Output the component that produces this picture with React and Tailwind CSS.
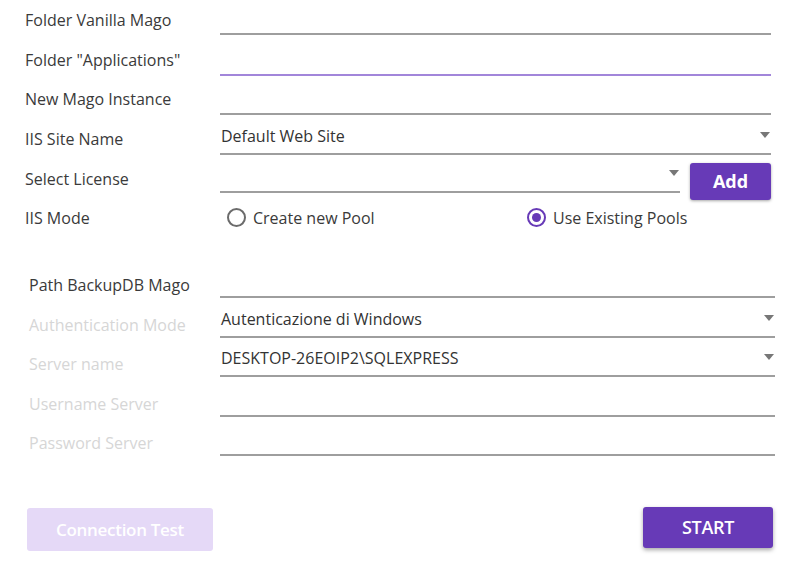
const font = { fontFamily: '"Open Sans", "Noto Sans", sans-serif' };

function Arrow() {
  return (
    <svg width="10" height="6" viewBox="0 0 10 6" className="shrink-0">
      <path d="M0 0h10L5 6z" fill="#777" />
    </svg>
  );
}

function Field({ value, select, focused, className = "" }) {
  return (
    <div
      className={`flex-1 flex items-end justify-between h-full pb-[8px] border-b-2 ${
        focused ? "border-[#a286da]" : "border-[#9e9e9e]"
      } ${className}`}
    >
      <span className="pl-[1px] text-[#333] leading-none mb-[1px]">{value}</span>
      {select && (
        <span className="mb-[7px] mr-[1px]">
          <Arrow />
        </span>
      )}
    </div>
  );
}

function Row({ label, h, children, muted, w = "w-[195px]", pb = "pb-[4px]" }) {
  return (
    <div className={`flex items-end ${h}`}>
      <div
        className={`${w} ${pb} shrink-0 ${
          muted ? "text-[#d6d6d6]" : "text-[#3a3a3a]"
        }`}
      >
        {label}
      </div>
      {children}
    </div>
  );
}

function Radio({ checked, label }) {
  return (
    <label className="flex items-center gap-[7px] text-[#3a3a3a]">
      <span
        className={`w-[19px] h-[19px] rounded-full border-2 flex items-center justify-center ${
          checked ? "border-[#673ab7]" : "border-[#6b6b6b]"
        }`}
      >
        {checked && <span className="w-[9px] h-[9px] rounded-full bg-[#673ab7]" />}
      </span>
      {label}
    </label>
  );
}

export default function App() {
  return (
    <div className="w-[802px] h-[568px] bg-white text-[16px] overflow-hidden" style={font}>
      <div className="pl-[25px] pr-[31px]">
        <Row label="Folder Vanilla Mago" h="h-[35px]" pb="pb-[3px]">
          <Field />
        </Row>
        <Row label={'Folder "Applications"'} h="h-[41px]">
          <Field focused />
        </Row>
        <Row label="New Mago Instance" h="h-[39px]">
          <Field />
        </Row>
        <Row label="IIS Site Name" h="h-[40px]">
          <Field value="Default Web Site" select />
        </Row>
        <div className="flex items-end h-[45px]">
          <div className="w-[195px] shrink-0 pb-[9px] text-[#3a3a3a]">Select License</div>
          <Field select className="mb-[7px] h-[38px]" />
          <button className="ml-[10px] w-[81px] h-[37px] rounded-[3px] bg-[#673ab7] text-white font-bold text-[18px] shadow-[0_1px_3px_rgba(0,0,0,0.35)]">
            Add
          </button>
        </div>
        <div className="flex items-center h-[35px]">
          <div className="w-[202px] shrink-0 text-[#3a3a3a]">IIS Mode</div>
          <div className="w-[300px]">
            <Radio label="Create new Pool" />
          </div>
          <Radio checked label="Use Existing Pools" />
        </div>
      </div>

      <div className="pl-[29px] pr-[27px] mt-[23px]">
        <Row label="Path BackupDB Mago" h="h-[40px]" w="w-[191px]" pb="pb-[1px]">
          <Field />
        </Row>
        <Row label="Authentication Mode" h="h-[40px]" w="w-[191px]" pb="pb-[1px]" muted>
          <Field value="Autenticazione di Windows" select />
        </Row>
        <Row label="Server name" h="h-[39px]" w="w-[191px]" pb="pb-[1px]" muted>
          <Field value="DESKTOP-26EOIP2\SQLEXPRESS" select />
        </Row>
        <Row label="Username Server" h="h-[40px]" w="w-[191px]" pb="pb-[1px]" muted>
          <Field />
        </Row>
        <Row label="Password Server" h="h-[39px]" w="w-[191px]" pb="pb-[1px]" muted>
          <Field />
        </Row>
      </div>

      <div className="flex justify-between items-start pl-[27px] pr-[29px] mt-[51px]">
        <button className="mt-[1px] w-[186px] h-[43px] rounded-[3px] bg-[#e5d9f7] text-white font-semibold text-[17px] tracking-[-0.3px]">
          Connection Test
        </button>
        <button className="w-[130px] h-[41px] rounded-[3px] bg-[#673ab7] text-white font-semibold text-[18px] tracking-[-0.3px] shadow-[0_2px_4px_rgba(0,0,0,0.35)]">
          START
        </button>
      </div>
    </div>
  );
}
